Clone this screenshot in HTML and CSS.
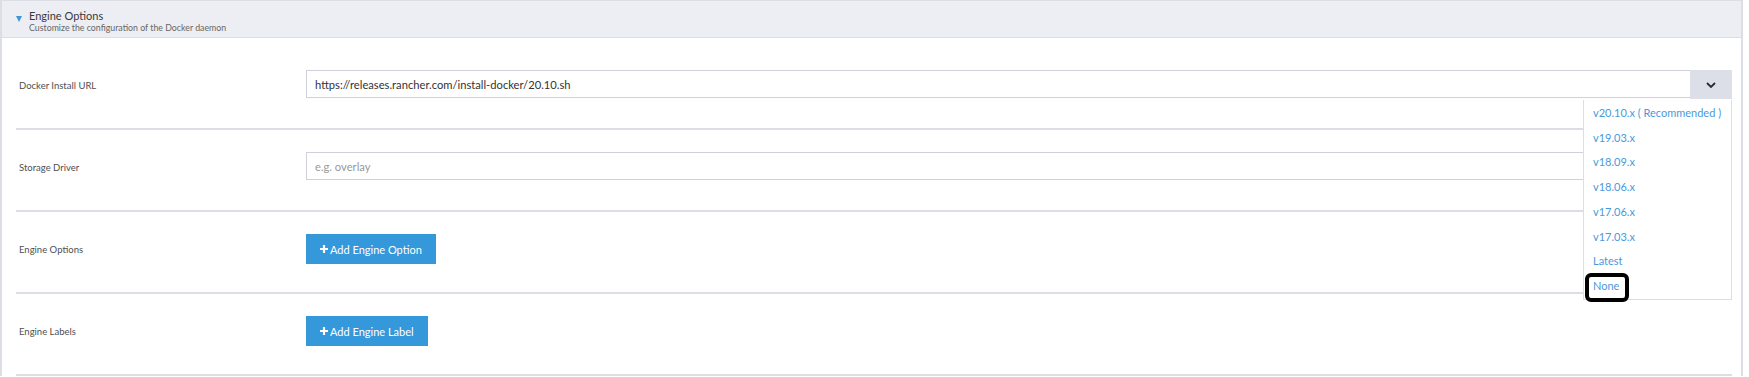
FILE: index.html
```html
<!DOCTYPE html>
<html lang="en">
<head>
    <meta charset="UTF-8">
    <meta name="viewport" content="width=device-width, initial-scale=1.0">
    <title>Engine Options</title>
    <link rel="stylesheet" href="styles.css">
</head>
<body>
    <div class="accordion">
        <div class="accordion-header">
            <span class="caret"></span>
            <div>
                <div class="accordion-title">Engine Options</div>
                <div class="accordion-desc">Customize the configuration of the Docker daemon</div>
            </div>
        </div>
        <div class="accordion-body">
            <div class="form-row">
                <label class="form-label" for="installUrl">Docker Install URL</label>
                <div class="form-control">
                    <div class="input-group">
                        <input type="text" id="installUrl" value="https://releases.rancher.com/install-docker/20.10.sh">
                        <button type="button" class="dropdown-toggle" aria-label="Choose version">
                            <svg width="10" height="6" viewBox="0 0 10 6"><polyline points="1,1 5,5 9,1" fill="none" stroke="#2b2b2b" stroke-width="1.8"/></svg>
                        </button>
                        <ul class="dropdown-menu">
                            <li>v20.10.x ( Recommended )</li>
                            <li>v19.03.x</li>
                            <li>v18.09.x</li>
                            <li>v18.06.x</li>
                            <li>v17.06.x</li>
                            <li>v17.03.x</li>
                            <li>Latest</li>
                            <li class="marked">None</li>
                        </ul>
                    </div>
                </div>
            </div>
            <div class="form-row">
                <label class="form-label" for="storageDriver">Storage Driver</label>
                <div class="form-control">
                    <input type="text" id="storageDriver" placeholder="e.g. overlay">
                </div>
            </div>
            <div class="form-row">
                <span class="form-label">Engine Options</span>
                <div class="form-control">
                    <button type="button" class="btn-add">
                        <svg width="8" height="8" viewBox="0 0 8 8"><path d="M4 0v8M0 4h8" stroke="#fff" stroke-width="2.2"/></svg>
                        Add Engine Option
                    </button>
                </div>
            </div>
            <div class="form-row">
                <span class="form-label">Engine Labels</span>
                <div class="form-control">
                    <button type="button" class="btn-add">
                        <svg width="8" height="8" viewBox="0 0 8 8"><path d="M4 0v8M0 4h8" stroke="#fff" stroke-width="2.2"/></svg>
                        Add Engine Label
                    </button>
                </div>
            </div>
        </div>
    </div>
</body>
</html>
```

FILE: styles.css
```css
body {
    margin: 0;
    font-family: Lato, "Open Sans", sans-serif;
    background: #fff;
    color: #4a4a4a;
}

.accordion {
    width: 1739px;
    border-left: 2px solid #dcdee6;
    border-right: 2px solid #dcdee6;
}

.accordion-header {
    display: flex;
    align-items: flex-start;
    height: 38px;
    padding: 8px 0 0 14px;
    box-sizing: border-box;
    background: #edeef3;
    border-top: 1px solid #dcdee6;
    border-bottom: 1px solid #dcdee6;
}

.caret {
    width: 0;
    height: 0;
    margin: 7px 7px 0 0;
    border-left: 3.5px solid transparent;
    border-right: 3.5px solid transparent;
    border-top: 6px solid #3d98d3;
}

.accordion-title {
    font-size: 11px;
    line-height: 13px;
    color: #3a3a3a;
}

.accordion-desc {
    font-size: 8.8px;
    line-height: 11px;
    color: #666;
}

.accordion-body {
    padding: 10px 9px 0 14px;
}

.form-row {
    display: grid;
    grid-template-columns: 290px 1fr;
    align-items: center;
    padding: 22px 0 28px;
    border-bottom: 2px solid #dcdee6;
}

.form-label {
    font-size: 9.5px;
    color: #4f4f4f;
    padding-left: 3px;
    align-self: center;
}

.form-control {
    height: 30px;
}

.form-control input {
    width: 100%;
    height: 28px;
    box-sizing: border-box;
    border: 1px solid #cfd2dc;
    padding: 0 8px;
    font-family: Lato, "Open Sans", sans-serif;
    font-size: 11.2px;
    color: #333;
    outline: none;
}

.form-control input::placeholder {
    color: #999;
}

.input-group {
    display: flex;
    position: relative;
}

.input-group input {
    flex: 1;
    border-right: none;
}

.dropdown-toggle {
    width: 42px;
    height: 29px;
    border: none;
    background: #dcdee8;
    display: flex;
    align-items: center;
    justify-content: center;
    padding: 0;
}

.dropdown-menu {
    position: absolute;
    right: 0;
    top: 30px;
    width: 149px;
    box-sizing: border-box;
    margin: 0;
    padding: 1px 0 0;
    list-style: none;
    background: #fff;
    border: 1px solid #dcdee6;
    border-top: none;
    z-index: 2;
}

.dropdown-menu li {
    line-height: 24.7px;
    padding-left: 9px;
    font-size: 11px;
    color: #4b98dc;
    white-space: nowrap;
    position: relative;
}

.dropdown-menu li.marked::after {
    content: "";
    position: absolute;
    left: 1px;
    top: -1px;
    width: 44px;
    height: 29px;
    box-sizing: border-box;
    border: 4px solid #000;
    border-radius: 6px;
}

.btn-add {
    height: 30px;
    padding: 0 14px;
    border: none;
    background: #3498db;
    color: #fff;
    font-family: Lato, "Open Sans", sans-serif;
    font-size: 11px;
    display: inline-flex;
    align-items: center;
    gap: 2px;
    cursor: pointer;
}
```
